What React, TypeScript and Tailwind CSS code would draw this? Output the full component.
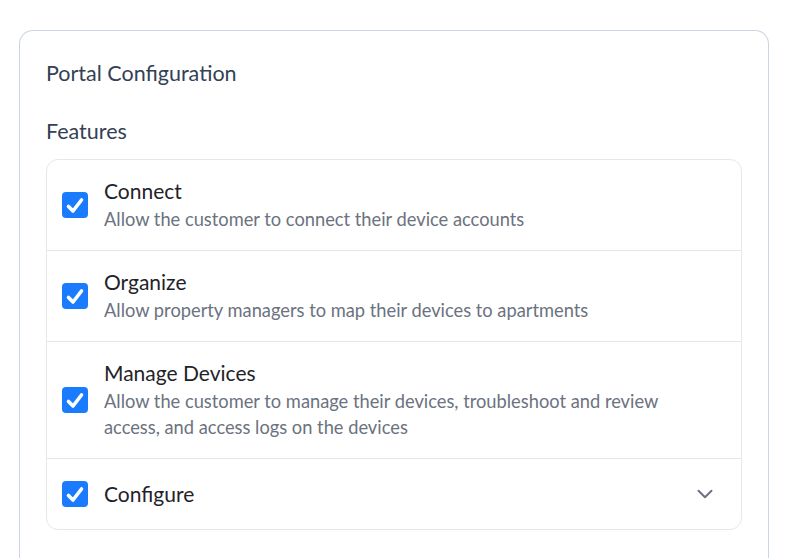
import React, { useState } from 'react';

type Feature = {
  id: string;
  title: string;
  description?: string;
  expandable?: boolean;
};

const features: Feature[] = [
  {
    id: 'connect',
    title: 'Connect',
    description: 'Allow the customer to connect their device accounts',
  },
  {
    id: 'organize',
    title: 'Organize',
    description: 'Allow property managers to map their devices to apartments',
  },
  {
    id: 'manage',
    title: 'Manage Devices',
    description:
      'Allow the customer to manage their devices, troubleshoot and review access, and access logs on the devices',
  },
  { id: 'configure', title: 'Configure', expandable: true },
];

function Checkbox({ checked, onChange }: { checked: boolean; onChange: () => void }) {
  return (
    <button
      onClick={onChange}
      className={`flex h-[26px] w-[26px] shrink-0 items-center justify-center rounded-[4px] ${
        checked ? 'bg-[#1a7bff]' : 'border-2 border-gray-300 bg-white'
      }`}
    >
      {checked && (
        <svg width="26" height="26" viewBox="0 0 26 26" fill="none">
          <path
            d="M6.5 14.5l4.5 4.5L19.5 8"
            stroke="white"
            strokeWidth="3.6"
            strokeLinecap="round"
            strokeLinejoin="round"
          />
        </svg>
      )}
    </button>
  );
}

export default function App() {
  const [checked, setChecked] = useState<Record<string, boolean>>({
    connect: true,
    organize: true,
    manage: true,
    configure: true,
  });

  const toggle = (id: string) => setChecked((c) => ({ ...c, [id]: !c[id] }));

  return (
    <div className="min-h-screen bg-white px-[19px] pt-[30px]" style={{ fontFamily: '"Source Sans Pro", Lato, sans-serif' }}>
      <div className="rounded-t-[14px] border border-b-0 border-[#cbd5e1] px-[26px] pt-[28px] pb-10">
        {/* Header */}
        <h2 className="text-[21.5px] leading-7 text-[#334155]">Portal Configuration</h2>
        <h3 className="mt-[30px] text-[21.5px] leading-7 text-[#334155]">Features</h3>

        {/* Feature list */}
        <div className="mt-[14px] divide-y divide-[#e5e7eb] rounded-[12px] border border-[#e5e7eb]">
          {features.map((f) => (
            <div
              key={f.id}
              className={`flex items-center gap-[16px] pl-[15px] pr-[26px] ${
                f.expandable ? 'h-[70px]' : 'pt-[17px] pb-[17.6px]'
              }`}
            >
              <Checkbox checked={checked[f.id]} onChange={() => toggle(f.id)} />
              <div className="flex-1">
                <div className="text-[21px] leading-[28px] text-[#1f2328]">{f.title}</div>
                {f.description && (
                  <div className="mt-[2px] pr-[20px] text-[18.3px] leading-[25.5px] text-[#6b7280]">
                    {f.description}
                  </div>
                )}
              </div>
              {f.expandable && (
                <svg width="16" height="10" viewBox="0 0 16 10" fill="none" className="mr-[2px]">
                  <path
                    d="M1.5 1.8L8 8.2l6.5-6.4"
                    stroke="#6b7280"
                    strokeWidth="2"
                    strokeLinecap="round"
                    strokeLinejoin="round"
                  />
                </svg>
              )}
            </div>
          ))}
        </div>
      </div>
    </div>
  );
}
